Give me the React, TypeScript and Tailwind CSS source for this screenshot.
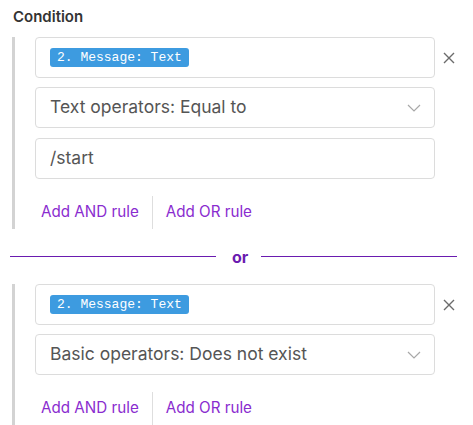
import React from "react";

const Badge = () => (
  <span className="inline-flex items-center h-[19px] px-[7px] rounded-[3px] bg-[#3d9be0] text-white text-[13px] leading-none" style={{ fontFamily: '"Liberation Mono", monospace' }}>
    2. Message: Text
  </span>
);

const Chevron = () => (
  <svg width="14" height="8" viewBox="0 0 14 8" className="shrink-0">
    <polyline points="1,1 7,7 13,1" fill="none" stroke="#a8a8a8" strokeWidth="1.2" />
  </svg>
);

const XIcon = () => (
  <svg width="12" height="12" viewBox="0 0 12 12">
    <path d="M1 1 L11 11 M11 1 L1 11" stroke="#6b6b6b" strokeWidth="1.4" />
  </svg>
);

const Box = ({ children, className = "" }: { children: React.ReactNode; className?: string }) => (
  <div className={"w-[400px] h-[41px] border border-[#dcdcdc] rounded-[4px] flex items-center pl-[14px] pr-[13px] " + className}>{children}</div>
);

const Links = () => (
  <div className="flex items-center h-[33px] text-[15.2px] text-[#8a2ccf]">
    <span className="pl-[6px] pr-[13px]">Add AND rule</span>
    <div className="w-px self-stretch bg-[#dedede]" />
    <span className="pl-[13px]">Add OR rule</span>
  </div>
);

const Group = ({ op, input }: { op: string; input?: string }) => (
  <div className="ml-[12px] border-l-[3px] border-[#d3d3d3] pl-[20px] flex flex-col">
    <div className="flex items-center">
      <Box>
        <Badge />
      </Box>
      <div className="ml-[8px] flex items-center"><XIcon /></div>
    </div>
    <Box className="mt-[9px] justify-between">
      <span className="text-[17.5px] text-[#555]">{op}</span>
      <Chevron />
    </Box>
    {input && (
      <Box className="mt-[10px]">
        <span className="text-[17.5px] text-[#555]">{input}</span>
      </Box>
    )}
    <div className="mt-[17px]">
      <Links />
    </div>
  </div>
);

export default function App() {
  return (
    <div className="w-[473px] h-[425px] bg-white overflow-hidden" style={{ fontFamily: 'Inter, "Noto Sans", sans-serif' }}>
      <div className="pl-[13px] pt-[8px] h-[37px] text-[15px] font-semibold text-[#333] leading-[18px]">Condition</div>
      <Group op="Text operators: Equal to" input="/start" />
      <div className="h-[55px] flex items-center pl-[10px] pr-[16px]">
        <div className="w-[206px] h-[1.5px] bg-[#6a1bb0]" />
        <span className="pl-[16px] pr-[13px] text-[16px] font-bold text-[#6a1bb0] leading-none">or</span>
        <div className="flex-1 h-[1.5px] bg-[#6a1bb0]" />
      </div>
      <Group op="Basic operators: Does not exist" />
    </div>
  );
}
